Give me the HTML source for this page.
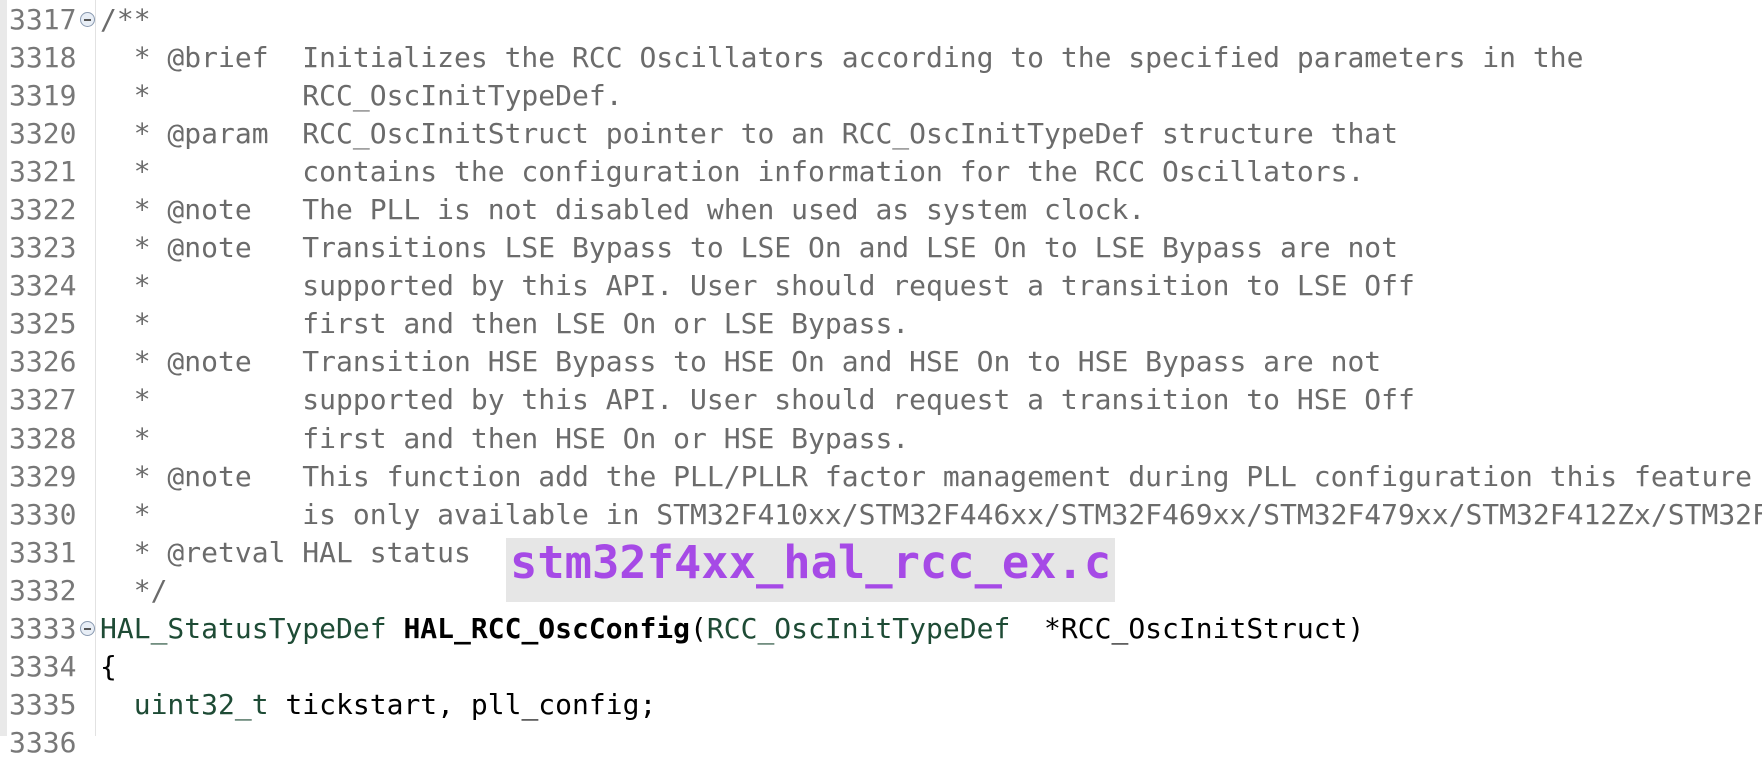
<!DOCTYPE html>
<html><head><meta charset="utf-8"><style>
body{margin:0;width:1762px;height:736px;background:#fff;overflow:hidden;position:relative;font-family:"DejaVu Sans Mono","Liberation Mono",monospace;font-size:28px;}
.strip{position:absolute;left:0;top:0;width:7px;height:736px;background:#e9e9e9;}
.sep{position:absolute;left:95px;top:0;width:1px;height:736px;background:#e2e2e2;}
.ln{position:absolute;left:9px;top:1px;color:#787878;line-height:38.05px;white-space:pre;}
.code{position:absolute;left:100px;top:1px;line-height:38.05px;white-space:pre;color:#000;}
.c{color:#6b6b6b}
.t{color:#1e4b35}
.b{font-weight:bold}
.fold{position:absolute;left:80px;width:13px;height:13px;border:1px solid #8a9ab0;border-radius:50%;background:#e8eef6;}
.fold:after{content:"";position:absolute;left:3px;top:6px;width:7px;height:2px;background:#555;}
.lab{position:absolute;left:506px;top:538px;width:609px;height:64px;background:#e6e6e6;}
.lab span{position:absolute;left:4px;top:2px;color:#a64ae6;font-weight:bold;font-size:45.4px;line-height:45px;white-space:pre;}
</style></head><body>
<div class="strip"></div><div class="sep"></div>
<div class="ln">3317
3318
3319
3320
3321
3322
3323
3324
3325
3326
3327
3328
3329
3330
3331
3332
3333
3334
3335
3336</div>
<div class="fold" style="top:12px"></div>
<div class="fold" style="top:621px"></div>
<div class="code"><span class="c">/**
  * @brief  Initializes the RCC Oscillators according to the specified parameters in the
  *         RCC_OscInitTypeDef.
  * @param  RCC_OscInitStruct pointer to an RCC_OscInitTypeDef structure that
  *         contains the configuration information for the RCC Oscillators.
  * @note   The PLL is not disabled when used as system clock.
  * @note   Transitions LSE Bypass to LSE On and LSE On to LSE Bypass are not
  *         supported by this API. User should request a transition to LSE Off
  *         first and then LSE On or LSE Bypass.
  * @note   Transition HSE Bypass to HSE On and HSE On to HSE Bypass are not
  *         supported by this API. User should request a transition to HSE Off
  *         first and then HSE On or HSE Bypass.
  * @note   This function add the PLL/PLLR factor management during PLL configuration this feature
  *         is only available in STM32F410xx/STM32F446xx/STM32F469xx/STM32F479xx/STM32F412Zx/STM32F
  * @retval HAL status
  */</span>
<span class="t">HAL_StatusTypeDef</span> <span class="b">HAL_RCC_OscConfig</span>(<span class="t">RCC_OscInitTypeDef</span>  *RCC_OscInitStruct)
{
  <span class="t">uint32_t</span> tickstart, pll_config;
</div>
<div class="lab"><span>stm32f4xx_hal_rcc_ex.c</span></div>
</body></html>
